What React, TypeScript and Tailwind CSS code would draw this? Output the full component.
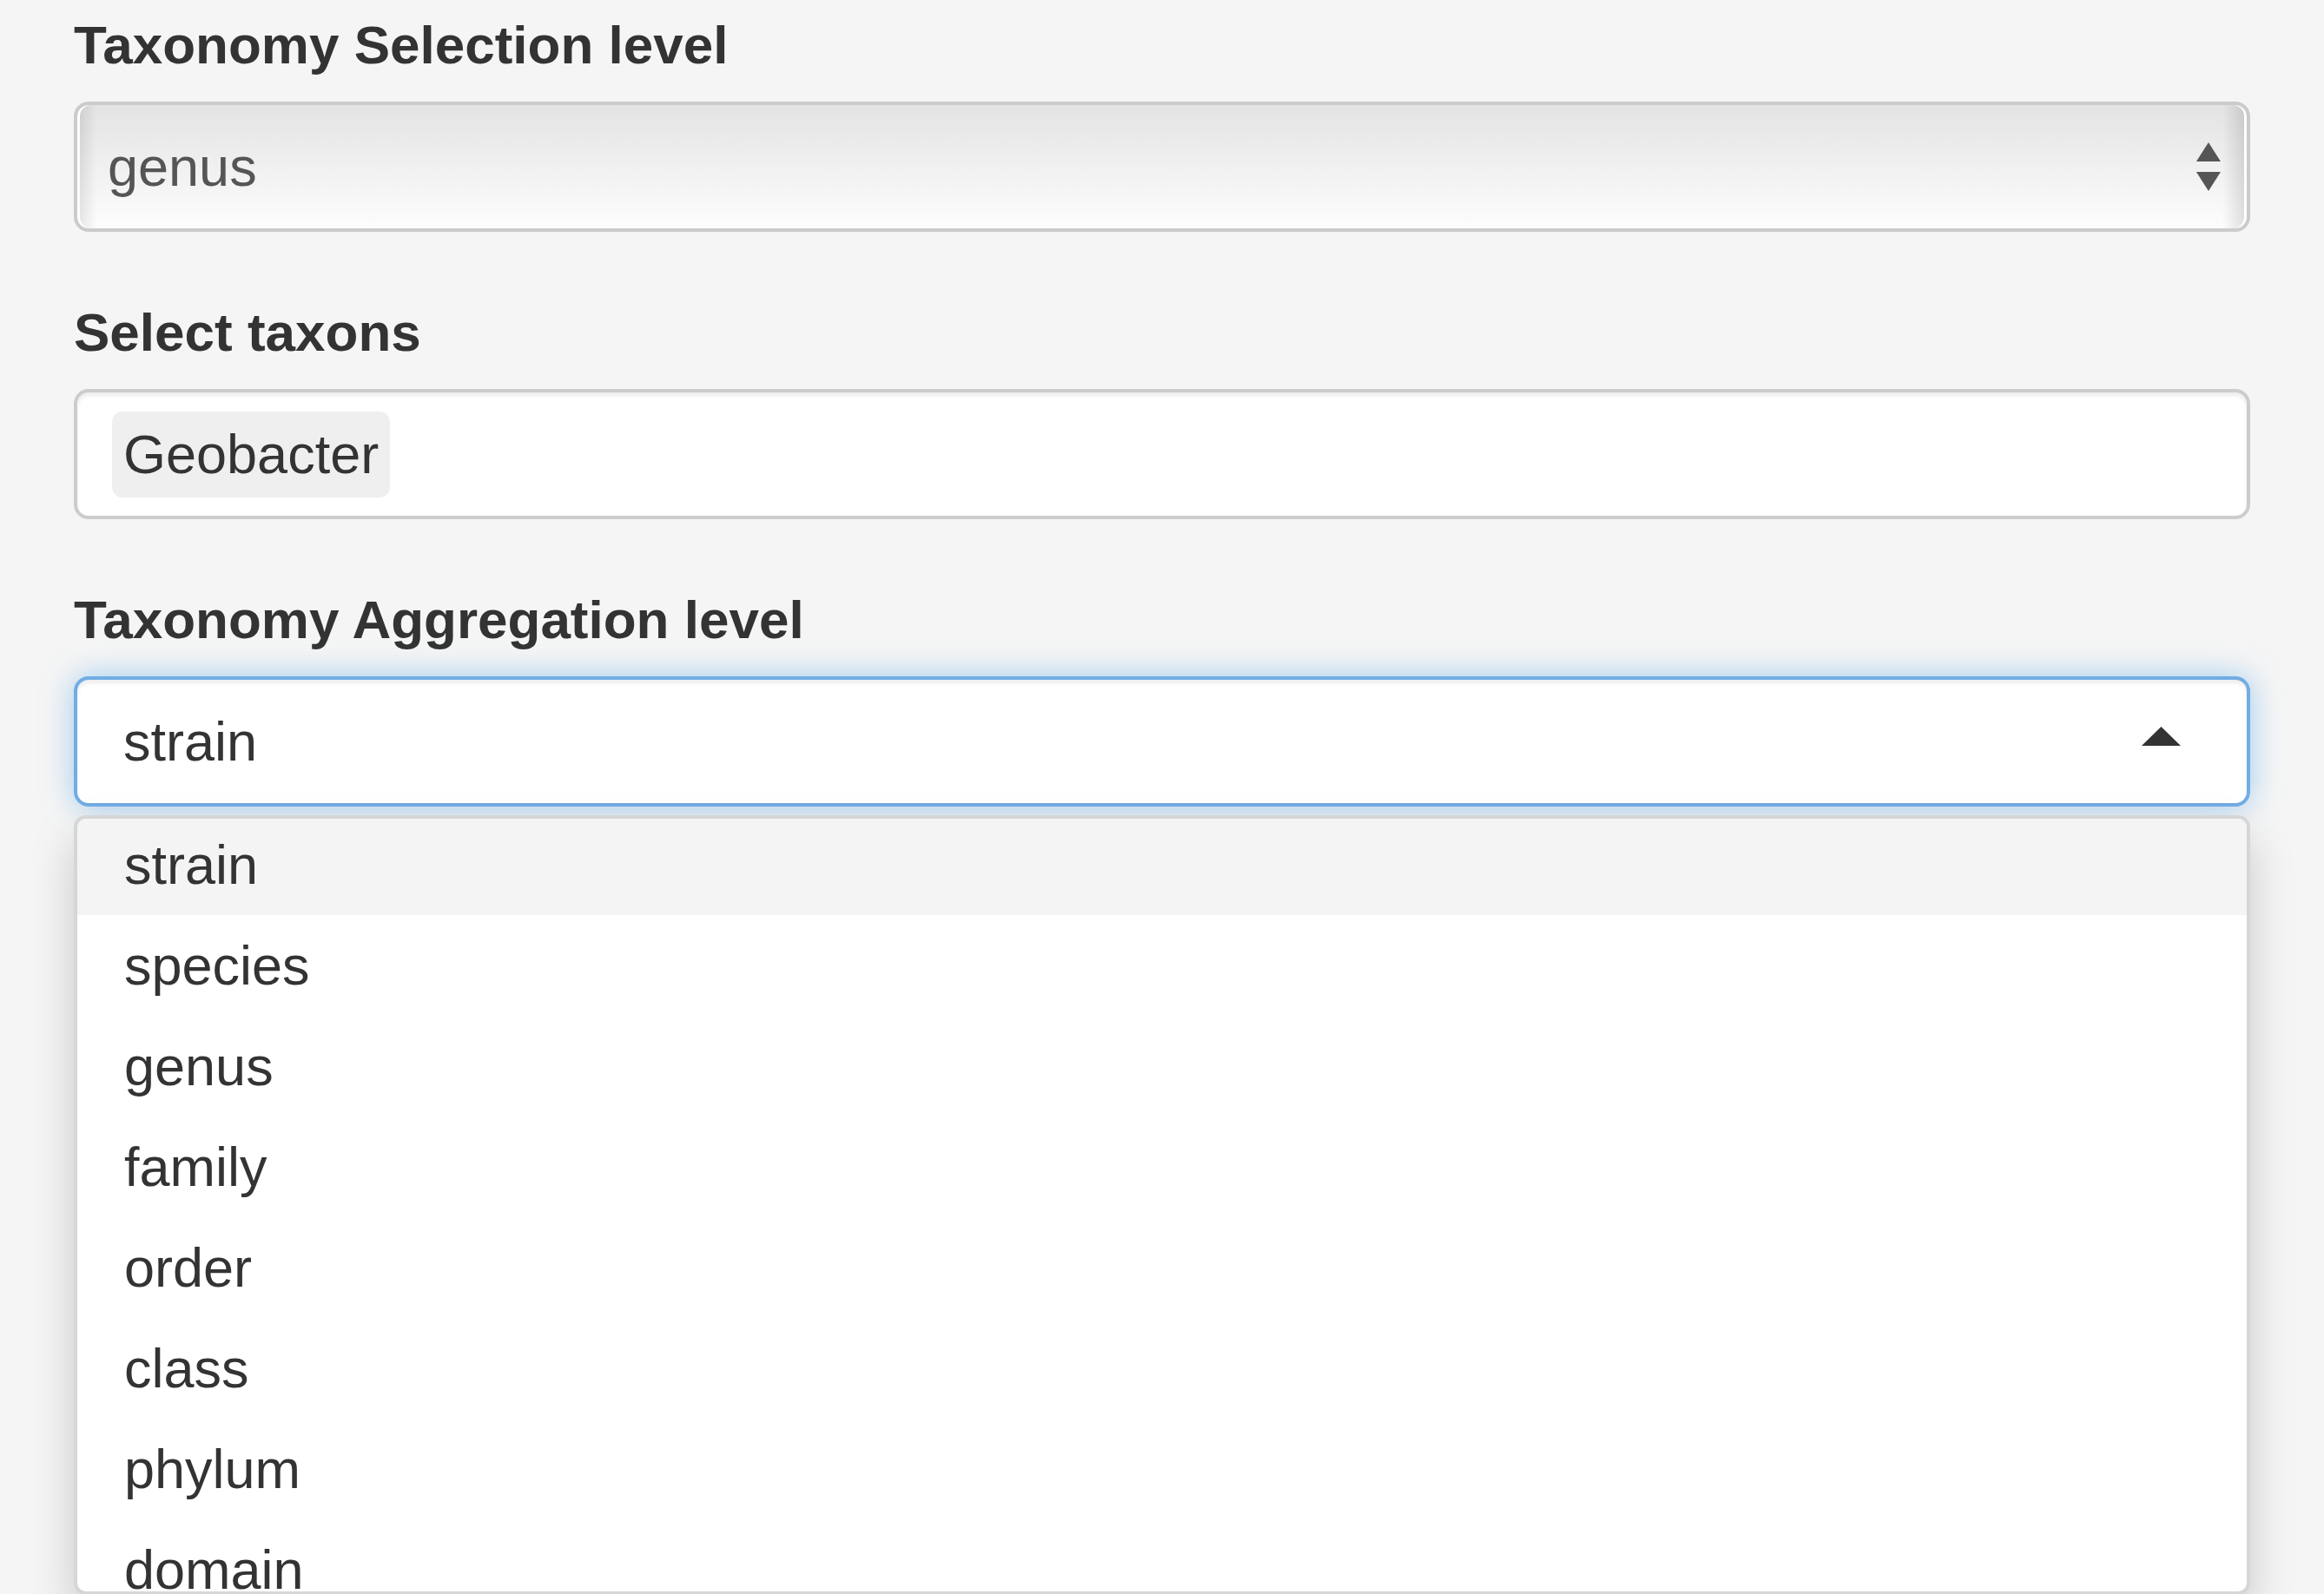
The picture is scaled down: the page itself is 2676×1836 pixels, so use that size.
import React from 'react';

const levels = ['strain', 'species', 'genus', 'family', 'order', 'class', 'phylum', 'domain'];

function Label({children}: {children: React.ReactNode}) {
  return (
    <label className="block mb-[22px] text-[62px] leading-[86px] font-bold text-[#333]">
      {children}
    </label>
  );
}

function NativeSelect({value}: {value: string}) {
  return (
    <div className="flex items-center justify-between h-[150px] pl-[35px] pr-[30px] rounded-[17px] border-[4px] border-[#cbcbcb] bg-[linear-gradient(to_right,rgba(0,0,0,0.10),rgba(0,0,0,0)_22px,rgba(0,0,0,0)_calc(100%_-_28px),rgba(0,0,0,0.13)),linear-gradient(to_bottom,#e3e3e3,#fdfdfd)] shadow-[inset_3px_0_0_#fff,inset_-3px_0_0_#fff]">
      <span className="text-[63px] text-[#555]">{value}</span>
      <svg width="28" height="56" viewBox="0 0 28 56">
        <polygon points="14,0 28,22 0,22" fill="#555" />
        <polygon points="0,34 28,34 14,56" fill="#555" />
      </svg>
    </div>
  );
}

export default function App() {
  return (
    <div className="h-[1836px] overflow-hidden bg-[#f5f5f5] px-[85px] pt-[9px] font-['Liberation_Sans',Arial,sans-serif]">
      {/* selection level */}
      <div className="mb-[73px]">
        <Label>Taxonomy Selection level</Label>
        <NativeSelect value="genus" />
      </div>

      {/* taxons */}
      <div className="mb-[73px]">
        <Label>Select taxons</Label>
        <div className="flex items-center h-[150px] px-[40px] rounded-[17px] border-[4px] border-[#cccccc] bg-white shadow-[inset_0_4px_4px_rgba(0,0,0,0.075)]">
          <span className="flex items-center h-[99px] px-[13px] rounded-[12px] bg-[#efefef] text-[63px] text-[#333]">
            Geobacter
          </span>
        </div>
      </div>

      {/* aggregation level */}
      <div>
        <Label>Taxonomy Aggregation level</Label>
        <div className="relative">
          <div className="flex items-center justify-between h-[150px] pl-[53px] pr-[76px] rounded-[17px] border-[4px] border-[#72ace4] bg-white shadow-[inset_0_4px_4px_rgba(0,0,0,0.075),0_0_35px_rgba(102,175,233,0.6)]">
            <span className="text-[63px] text-[#333]">strain</span>
            <svg width="45" height="22" viewBox="0 0 45 22" className="-mt-[12px]">
              <polygon points="22.5,0 45,22 0,22" fill="#333" />
            </svg>
          </div>

          <div className="absolute left-0 right-0 top-[160px] z-10 h-[898px] overflow-hidden rounded-[14px] border-[4px] border-[#d6d6d6] bg-white shadow-[0_26px_52px_rgba(0,0,0,0.175)]">
            <div className="flex flex-col gap-[5px]">
              {levels.map((l, i) => (
                <div
                  key={l}
                  className={`flex items-center h-[111px] pb-[4px] pl-[54px] text-[63px] text-[#333] ${i === 0 ? 'bg-[#f4f4f4]' : ''}`}
                >
                  {l}
                </div>
              ))}
            </div>
          </div>
        </div>
      </div>
    </div>
  );
}
